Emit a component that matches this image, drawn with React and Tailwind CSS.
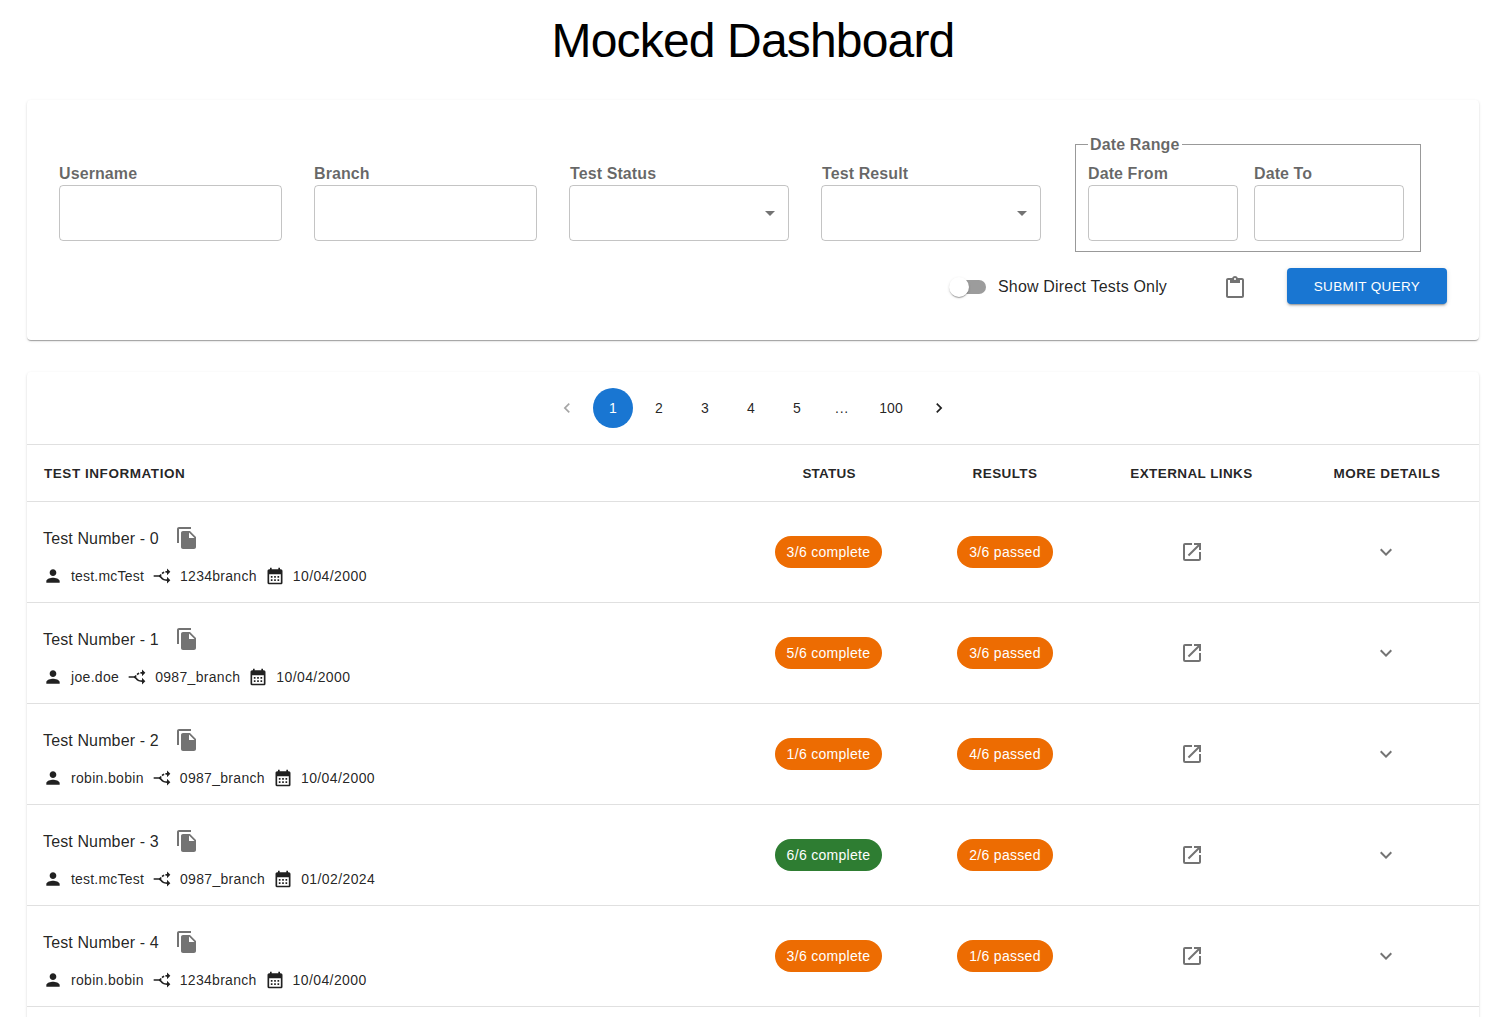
import { MdPerson, MdAltRoute, MdCalendarMonth, MdFileCopy, MdOpenInNew, MdKeyboardArrowDown, MdArrowDropDown, MdContentPaste, MdNavigateBefore, MdNavigateNext } from "react-icons/md";

const rows = [
  ["test.mcTest", "1234branch", "10/04/2000", 3, 3],
  ["joe.doe", "0987_branch", "10/04/2000", 5, 3],
  ["robin.bobin", "0987_branch", "10/04/2000", 1, 4],
  ["test.mcTest", "0987_branch", "01/02/2024", 6, 2],
  ["robin.bobin", "1234branch", "10/04/2000", 3, 1],
];

const paper = "rounded bg-white shadow-[0px_2px_1px_-1px_rgba(0,0,0,0.2),0px_1px_1px_0px_rgba(0,0,0,0.14),0px_1px_3px_0px_rgba(0,0,0,0.12)]";
const grid = "grid grid-cols-[715px_173px_180px_193px_191px] border-t border-[#e0e0e0]";

function Field({ label, width, select }) {
  return (
    <div className={width}>
      <label className={`block h-[23px] text-[16px] leading-[23px] font-bold tracking-[0.1px] text-black/60 ${select ? "pl-px" : ""}`}>{label}</label>
      <div className="flex h-14 items-center justify-end rounded border border-black/[0.23] pr-[6px] text-black/55">
        {select && <MdArrowDropDown size={24} />}
      </div>
    </div>
  );
}

function Chip({ children, done }) {
  return (
    <span className={`flex h-8 items-center rounded-2xl px-3 text-[14px] tracking-[0.3px] text-white ${done ? "bg-[#2e7d32]" : "bg-[#ed6c02]"}`}>
      {children}
    </span>
  );
}

function Page({ children, width = "w-10" }) {
  return <span className={`mx-[3px] flex h-10 items-center justify-center rounded-full ${width}`}>{children}</span>;
}

export default function App() {
  return (
    <div className="h-[1017px] overflow-hidden bg-white font-['Liberation_Sans',Arial,sans-serif] text-black/[0.87]">
      <div className="ml-[27px] w-[1452px]">
        <h1 className="pt-[13px] text-center text-[48px] leading-[56px] tracking-[-0.84px] text-black">Mocked Dashboard</h1>
        <section className={`mt-[31px] h-[240px] pt-[62px] ${paper}`}>
          <div className="flex h-[90px] pl-8">
            <div className="flex gap-8">
              <Field label="Username" width="w-[223px]" />
              <Field label="Branch" width="w-[223px]" />
              <Field label="Test Status" width="w-[220px]" select />
              <Field label="Test Result" width="w-[220px]" select />
            </div>
            <fieldset className="-mt-[29px] ml-[34px] h-[119px] w-[346px] border border-[#999999] pl-3">
              <legend className="h-[22px] px-[2px] pt-px text-[16px] leading-[22px] font-bold tracking-[0.15px] text-black/60">Date Range</legend>
              <div className="mt-[7px] flex gap-4">
                <Field label="Date From" width="w-[150px]" />
                <Field label="Date To" width="w-[150px]" />
              </div>
            </fieldset>
          </div>
          <div className="mt-[16px] flex h-9 items-center justify-end pr-8">
            <div className="flex items-center pt-[2px]">
              <span className="relative mr-3 h-[14px] w-[34px] rounded-full bg-[#9c9c9c]">
                <span className="absolute -top-[3px] -left-[3px] h-5 w-5 rounded-full bg-white shadow-[0px_2px_1px_-1px_rgba(0,0,0,0.2),0px_1px_1px_0px_rgba(0,0,0,0.14),0px_1px_3px_0px_rgba(0,0,0,0.12)]" />
              </span>
              <span className="w-[225px] text-[16px] tracking-[0.18px]">Show Direct Tests Only</span>
              <MdContentPaste size={24} className="mt-px mr-10 text-black/55" />
            </div>
            <button className="h-9 w-40 rounded bg-[#1976d2] pt-[2px] text-[13.5px] tracking-[0.35px] text-white shadow-[0px_3px_1px_-2px_rgba(0,0,0,0.2),0px_2px_2px_0px_rgba(0,0,0,0.14),0px_1px_5px_0px_rgba(0,0,0,0.12)]">SUBMIT QUERY</button>
          </div>
        </section>
        <section className={`mt-8 ${paper}`}>
          <nav className="flex h-[72px] items-center justify-center pr-[2px] text-[14px]">
            <Page><MdNavigateBefore size={20} className="opacity-40" /></Page>
            <span className="mx-[3px] flex h-10 w-10 items-center justify-center rounded-full bg-[#1976d2] text-white">1</span>
            <Page>2</Page>
            <Page>3</Page>
            <Page>4</Page>
            <Page>5</Page>
            <Page width="w-[38px]"><span className="tracking-[0.8px]">...</span></Page>
            <Page width="w-12">100</Page>
            <Page width="w-9"><MdNavigateNext size={20} /></Page>
          </nav>
          <div className={`${grid} h-[57px] items-center pt-[2px] text-center text-[13.5px] font-bold tracking-[0.4px]`}>
            <span className="pl-[17px] text-left tracking-[0.55px]">TEST INFORMATION</span>
            <span className="pl-px tracking-[0.2px]">STATUS</span>
            <span>RESULTS</span>
            <span>EXTERNAL LINKS</span>
            <span className="pl-[7px] tracking-[0.5px]">MORE DETAILS</span>
          </div>
          {rows.map(([user, branch, date, complete, passed], i) => (
            <div key={i} className={`${grid} h-[101px] items-center justify-items-center`}>
              <div className="w-full pt-[10px] pl-4">
                <div className="flex h-6 items-center">
                  <span className="w-[132px] pt-px text-[16px] tracking-[0.13px]">Test Number - {i}</span>
                  <MdFileCopy size={24} className="text-black/55" />
                </div>
                <div className="mt-[14px] flex h-6 items-center text-[14px] tracking-[0.4px]">
                  <MdPerson size={20} className="mr-2" />
                  <span className={user.startsWith("test") ? "tracking-[0.2px]" : "tracking-[0.32px]"}>{user}</span>
                  <MdAltRoute size={20} className="mx-2 rotate-90" />
                  <span className={branch.includes("_") ? "tracking-[0.31px]" : "tracking-[0.28px]"}>{branch}</span>
                  <MdCalendarMonth size={20} className="mx-2" />
                  {date}
                </div>
              </div>
              <Chip done={complete === 6}>{complete}/6 complete</Chip>
              <Chip>{passed}/6 passed</Chip>
              <MdOpenInNew size={24} className="text-black/55" />
              <MdKeyboardArrowDown size={24} className="ml-[5px] text-black/55" />
            </div>
          ))}
          <div className="h-[101px] border-t border-[#e0e0e0]" />
        </section>
      </div>
    </div>
  );
}
